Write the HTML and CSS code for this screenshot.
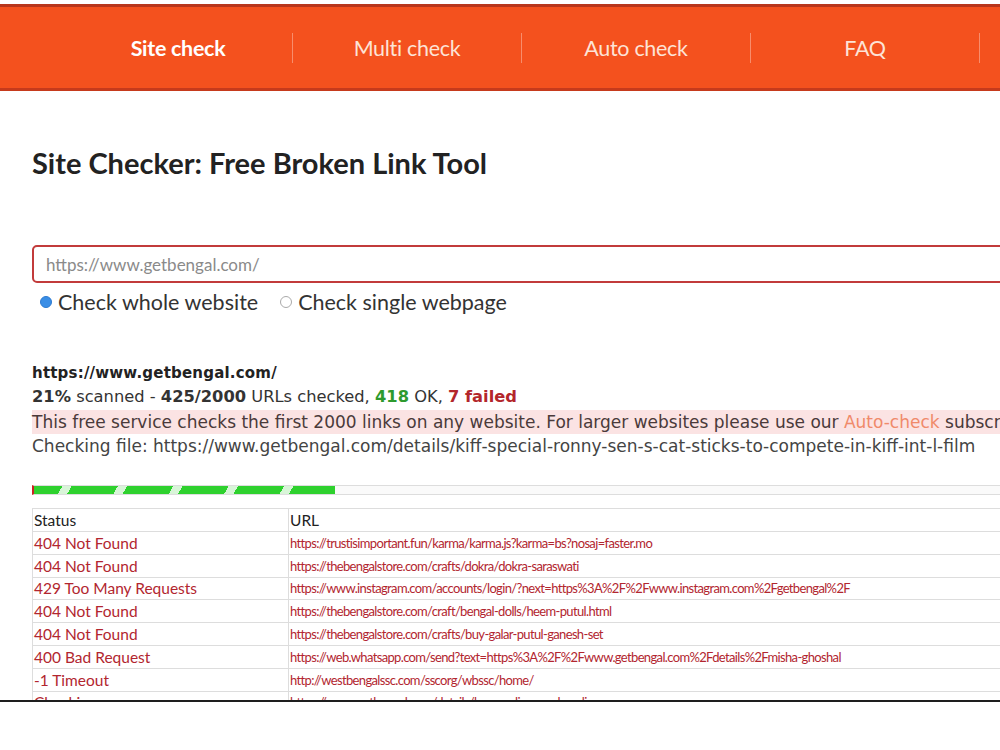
FILE: index.html
```html
<!DOCTYPE html>
<html lang="en">
<head>
    <meta charset="UTF-8">
    <meta name="viewport" content="width=device-width, initial-scale=1.0">
    <title>Site Checker: Free Broken Link Tool</title>
    <link rel="stylesheet" href="styles.css">
</head>
<body>
    <div class="screen">
        <div class="topbar">
            <ul class="nav">
                <li><a href="#" class="active">Site check</a></li>
                <li><a href="#">Multi check</a></li>
                <li><a href="#">Auto check</a></li>
                <li><a href="#">FAQ</a></li>
                <li><a href="#">&nbsp;</a></li>
            </ul>
        </div>

        <div class="main">
            <h1>Site Checker: Free Broken Link Tool</h1>

            <div class="form-group">
                <input type="text" class="url-input" value="https://www.getbengal.com/">
                <div class="options">
                    <label><span class="radio checked"></span>Check whole website</label>
                    <label><span class="radio"></span>Check single webpage</label>
                </div>
            </div>

            <div class="report">
                <div class="site">https://www.getbengal.com/</div>
                <div class="stats"><b>21%</b> scanned - <b>425/2000</b> URLs checked, <b class="ok">418</b> OK, <b class="bad">7 failed</b></div>
                <div class="notice">This free service checks the first 2000 links on any website. For larger websites please use our <a href="#">Auto-check</a> subscription service.</div>
                <div class="current">Checking file: https://www.getbengal.com/details/kiff-special-ronny-sen-s-cat-sticks-to-compete-in-kiff-int-l-film</div>
            </div>

            <div class="progress"><div class="progress-fill" style="width: 301px"></div></div>

            <table class="results">
                <tr><th>Status</th><th>URL</th></tr>
                <tr class="err"><td>404 Not Found</td><td>https://trustisimportant.fun/karma/karma.js?karma=bs?nosaj=faster.mo</td></tr>
                <tr class="err"><td>404 Not Found</td><td>https://thebengalstore.com/crafts/dokra/dokra-saraswati</td></tr>
                <tr class="err"><td>429 Too Many Requests</td><td>https://www.instagram.com/accounts/login/?next=https%3A%2F%2Fwww.instagram.com%2Fgetbengal%2F</td></tr>
                <tr class="err"><td>404 Not Found</td><td>https://thebengalstore.com/craft/bengal-dolls/heem-putul.html</td></tr>
                <tr class="err"><td>404 Not Found</td><td>https://thebengalstore.com/crafts/buy-galar-putul-ganesh-set</td></tr>
                <tr class="err"><td>400 Bad Request</td><td>https://web.whatsapp.com/send?text=https%3A%2F%2Fwww.getbengal.com%2Fdetails%2Fmisha-ghoshal</td></tr>
                <tr class="err"><td>-1 Timeout</td><td>http://westbengalssc.com/sscorg/wbssc/home/</td></tr>
                <tr class="err"><td>Checking...</td><td>https://www.getbengal.com/details/how-radio-mandowali</td></tr>
            </table>
        </div>
    </div>
</body>
</html>
```

FILE: styles.css
```css
body {
    margin: 0;
    font-family: Lato, 'Open Sans', sans-serif;
    color: #222;
    background: #fff;
}
.screen {
    height: 700px;
    overflow: hidden;
    border-bottom: 2px solid #1e1e1e;
}
.topbar {
    margin-top: 4px;
    height: 81px;
    background-color: #f4511e;
    border-top: 3px solid #b8361c;
    border-bottom: 3px solid #c63a1c;
    display: flex;
    align-items: center;
}
.nav {
    list-style: none;
    margin: 0 0 0 64px;
    padding: 0;
    display: flex;
}
.nav li {
    width: 228px;
    height: 30px;
    line-height: 30px;
    text-align: center;
    border-right: 1px solid rgba(255, 255, 255, 0.35);
}
.nav a {
    color: #fde3d6;
    text-decoration: none;
    font-size: 21.5px;
    letter-spacing: -0.3px;
}
.nav a.active {
    color: #fff;
    font-weight: bold;
}
.main {
    padding: 0 0 0 32px;
    overflow: hidden;
}
h1 {
    font-size: 29px;
    font-weight: bold;
    color: #222;
    margin: 56px 0 0 0;
    line-height: 32px;
}
.form-group {
    margin-top: 66px;
}
.url-input {
    display: block;
    width: 1100px;
    height: 38px;
    box-sizing: border-box;
    border: 2px solid #c23b3b;
    border-radius: 5px;
    padding: 0 12px;
    font-family: Lato, sans-serif;
    font-size: 17px;
    color: #8a8a8a;
}
.options {
    display: flex;
    gap: 22px;
    margin-top: 6px;
    padding-left: 8px;
    font-size: 21.5px;
    color: #333;
    line-height: 26px;
}
.options label {
    display: flex;
    align-items: center;
}
.radio {
    width: 10px;
    height: 10px;
    border-radius: 50%;
    border: 1px solid #aaa;
    margin-right: 6px;
    display: inline-block;
}
.radio.checked {
    background: #3a8ee6;
    border-color: #2c7ad0;
}
.report {
    margin-top: 46px;
    font-family: 'DejaVu Sans', Verdana, sans-serif;
    font-size: 17px;
    line-height: 24.3px;
}
.site {
    font-weight: bold;
    font-size: 15px;
    letter-spacing: 0.2px;
}
.stats {
    color: #333;
    font-size: 16.3px;
}
.ok {
    color: #2e9a2e;
}
.bad {
    color: #b3262b;
}
.notice {
    background: #fbe3e3;
    color: #4a3a3a;
    white-space: nowrap;
}
.notice a {
    color: #f08a6a;
    text-decoration: none;
}
.current {
    color: #444;
    white-space: nowrap;
}
.progress {
    margin-top: 27px;
    height: 8px;
    width: 1100px;
    border: 1px solid #ddd;
    border-left: 2px solid #c22;
    background: #fafafa;
}
.progress-fill {
    height: 100%;
    background: repeating-linear-gradient(-60deg, #2ed12e 0 40px, #d8f5d8 40px 48px);
}
.results {
    margin-top: 13px;
    border-collapse: collapse;
    font-size: 15.5px;
    width: 1100px;
}
.results th,
.results td {
    border: 1px solid #ddd;
    text-align: left;
    padding: 0 1px;
    height: 21.8px;
    white-space: nowrap;
    font-weight: normal;
}
.results th {
    color: #222;
}
.results th:first-child {
    width: 253px;
}
.results tr.err td {
    color: #b2262f;
}
.results tr.err td:last-child {
    font-size: 13px;
    letter-spacing: -0.65px;
}
```
